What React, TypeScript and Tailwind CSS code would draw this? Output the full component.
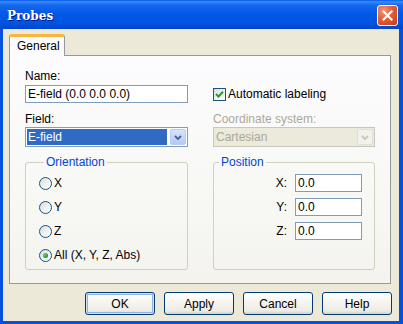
import React from "react"

function CloseButton() {
  return (
    <div className="mt-[2px] w-[21px] h-[21px] rounded-[3px] border border-white bg-[radial-gradient(circle_at_30%_25%,#F29479_0%,#E35D38_45%,#C23C17_100%)] flex items-center justify-center">
      <svg width="11" height="11" viewBox="0 0 11 11">
        <path d="M1.5 1.5 L9.5 9.5 M9.5 1.5 L1.5 9.5" stroke="white" strokeWidth="2.2" strokeLinecap="square" />
      </svg>
    </div>
  )
}

function Radio({ label, checked }: { label: string; checked?: boolean }) {
  return (
    <div className="h-[24px] flex items-center gap-[2px]">
      <span className="w-[13px] h-[13px] rounded-full border border-[#1C5180] bg-[linear-gradient(135deg,#DCDCD7_0%,#F3F3F0_60%,#FFFFFF_100%)] flex items-center justify-center">
        {checked && <span className="w-[5px] h-[5px] rounded-full bg-[radial-gradient(circle_at_35%_35%,#6FD66F_0%,#21A121_60%,#1A851A_100%)]" />}
      </span>
      <span>{label}</span>
    </div>
  )
}

function TextBox({ value, className }: { value: string; className?: string }) {
  return (
    <div className={"h-[18px] border border-[#7F9DB9] bg-white pl-[2px] flex items-center " + (className || "")}>
      {value}
    </div>
  )
}

function XpButton({ label, isDefault }: { label: string; isDefault?: boolean }) {
  return (
    <div
      className={
        "w-[70px] h-[23px] rounded-[3px] border border-[#003C74] bg-[linear-gradient(to_bottom,#FFFFFF_0%,#F4F3EE_50%,#ECEBE6_85%,#D6D0C5_100%)] flex items-center justify-center " +
        (isDefault ? "shadow-[inset_0_0_0_1px_#CEE7FF,inset_0_0_0_2px_#8DB2E3]" : "")
      }
    >
      {label}
    </div>
  )
}

function Chevron({ color }: { color: string }) {
  return (
    <svg width="8" height="5" viewBox="0 0 8 5">
      <path d="M1 1 L4 4 L7 1" stroke={color} strokeWidth="1.8" fill="none" />
    </svg>
  )
}

export default function App() {
  return (
    <div className="w-[403px] h-[324px] flex flex-col bg-[#0650DE] font-['Liberation_Sans',Arial,sans-serif] text-[12px] leading-[14px] text-black">
      <div className="h-[29px] shrink-0 flex items-center justify-between pl-[7px] pr-[5px] bg-[linear-gradient(to_bottom,#0058EE_0%,#3A8CF8_6%,#1567EE_18%,#0058E6_50%,#0054E0_80%,#0044CC_100%)]">
        <span className="mt-[3px] font-['DejaVu_Serif',serif] font-bold text-[12px] text-white [text-shadow:1px_1px_0_#0A1883]">
          Probes
        </span>
        <CloseButton />
      </div>

      <div className="flex-1 ml-[3px] mr-[4px] mb-[3px] bg-[#ECE9D8] flex flex-col pt-[5px]">
        <div className="ml-[6px] w-[56px] h-[22px] -mb-[1px] relative z-10 rounded-t-[3px] border-x border-[#919B9C] border-t-[3px] border-t-[#F7B53E] bg-[#FCFCFE] pl-[7px] pt-[2px]">
          General
        </div>

        <div className="ml-[6px] mr-[8px] h-[229px] border border-[#919B9C] bg-[linear-gradient(to_bottom,#FCFCFE_0%,#F7F7F3_70%,#F4F3EE_100%)] px-[15px] pt-[13px]">
          <div className="grid grid-cols-[163px_162px] gap-x-[25px]">
            <div className="flex flex-col">
              <span>Name:</span>
              <TextBox value="E-field (0.0 0.0 0.0)" className="mt-[2px]" />
            </div>
            <div className="self-end h-[18px] flex items-center gap-[2px]">
              <span className="w-[13px] h-[13px] border border-[#1C5180] bg-[linear-gradient(135deg,#DCDCD7_0%,#F3F3F0_60%,#FFFFFF_100%)] flex items-center justify-center">
                <svg width="9" height="9" viewBox="0 0 9 9">
                  <path d="M1 4 L3.5 6.5 L8 1.8" stroke="#21A121" strokeWidth="2" fill="none" />
                </svg>
              </span>
              <span>Automatic labeling</span>
            </div>

            <div className="flex flex-col mt-[9px]">
              <span>Field:</span>
              <div className="mt-[1px] h-[20px] border border-[#7F9DB9] bg-white flex p-[1px] gap-[3px]">
                <div className="flex-1 bg-[#316AC5] text-white flex items-center pl-[1px]">E-field</div>
                <div className="w-[16px] rounded-[2px] border border-[#B9CCF7] bg-[linear-gradient(to_bottom,#D8E4FD_0%,#C1D3FB_60%,#B4C8F6_100%)] flex items-center justify-center">
                  <Chevron color="#4D6185" />
                </div>
              </div>
            </div>
            <div className="flex flex-col mt-[9px] text-[#ACA899]">
              <span>Coordinate system:</span>
              <div className="mt-[1px] h-[20px] border border-[#C9C7BA] bg-[#EBEADB] flex p-[1px]">
                <div className="flex-1 flex items-center pl-[1px]">Cartesian</div>
                <div className="w-[16px] rounded-[2px] border border-[#E0DFD8] bg-[#F2F1EC] flex items-center justify-center">
                  <Chevron color="#C9C7BA" />
                </div>
              </div>
            </div>

            <fieldset className="mt-[8px] border border-[#D0D0BF] rounded-[3px] pl-[13px] pt-[2px] pb-[2px]">
              <legend className="ml-[5px] px-[2px] text-[#0046D5]">Orientation</legend>
              <Radio label="X" />
              <Radio label="Y" />
              <Radio label="Z" />
              <Radio label="All (X, Y, Z, Abs)" checked />
            </fieldset>
            <fieldset className="mt-[8px] border border-[#D0D0BF] rounded-[3px] pr-[12px] pt-[2px]">
              <legend className="ml-[5px] px-[2px] text-[#0046D5]">Position</legend>
              {["X:", "Y:", "Z:"].map((axis) => (
                <div key={axis} className="h-[24px] flex items-center justify-end gap-[8px]">
                  <span>{axis}</span>
                  <TextBox value="0.0" className="w-[67px]" />
                </div>
              ))}
            </fieldset>
          </div>
        </div>

        <div className="mt-[8px] mr-[7px] flex justify-end gap-[9px]">
          <XpButton label="OK" isDefault />
          <XpButton label="Apply" />
          <XpButton label="Cancel" />
          <XpButton label="Help" />
        </div>
      </div>
    </div>
  )
}
